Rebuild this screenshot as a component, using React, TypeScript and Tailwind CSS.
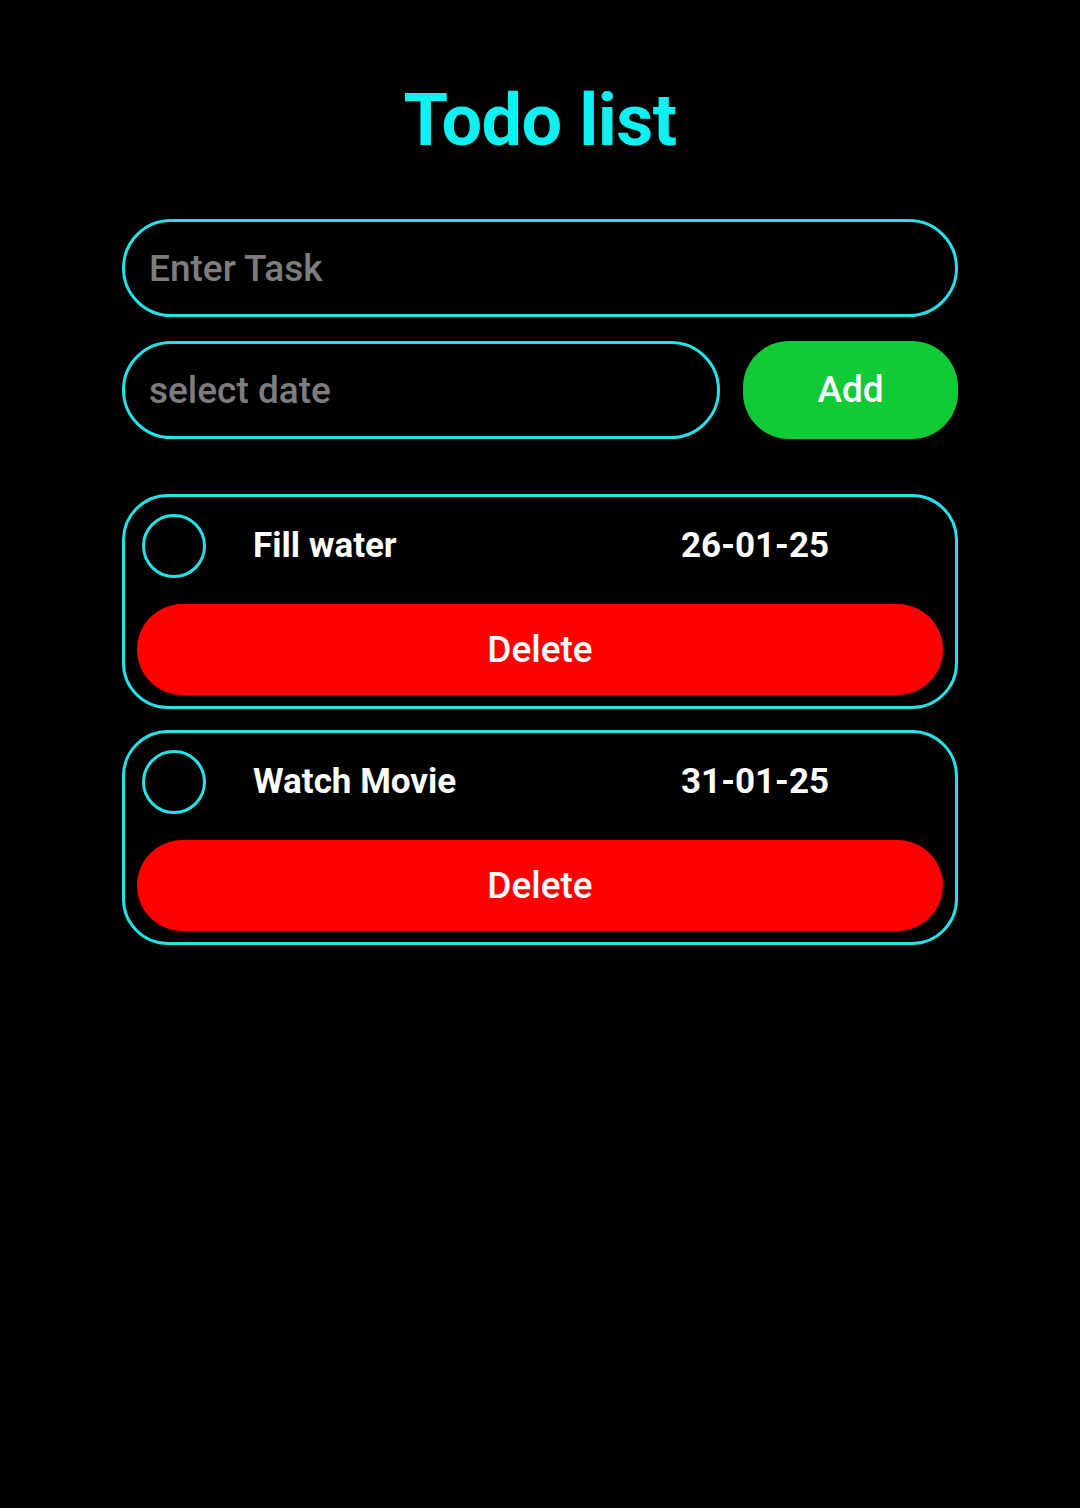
import { useState } from 'react';

type Task = { id: number; name: string; date: string };

const initialTasks: Task[] = [
  { id: 1, name: 'Fill water', date: '26-01-25' },
  { id: 2, name: 'Watch Movie', date: '31-01-25' },
];

function TaskCard({ task, onDelete }: { task: Task; onDelete: () => void }) {
  return (
    <div className="w-full h-[215px] rounded-[46px] border-[3px] border-[#25e2e8] px-[12px] pt-[17px]">
      <div className="flex items-center h-[64px]">
        <div className="w-[64px] h-[64px] shrink-0 rounded-full border-[3px] border-[#25e2e8] ml-[5px]" />
        <span className="ml-[47px] w-[428px] text-[35px] font-bold text-white">{task.name}</span>
        <span className="text-[35px] font-bold text-white">{task.date}</span>
      </div>
      <button
        onClick={onDelete}
        className="mt-[26px] w-full h-[91px] rounded-full bg-[#ff0000] text-white text-[37px] font-medium"
      >
        Delete
      </button>
    </div>
  );
}

export default function App() {
  const [tasks, setTasks] = useState(initialTasks);

  return (
    <div className="min-h-[1508px] w-full bg-black font-['Roboto',sans-serif] flex flex-col items-center">
      <h1 className="mt-[85px] text-[72px] font-bold leading-none text-[#0ff0f0] tracking-[-0.5px]">
        Todo list
      </h1>

      <div className="mt-[62px] w-[836px] flex flex-col">
        {/* Inputs */}
        <input
          placeholder="Enter Task"
          className="h-[98px] w-full rounded-full border-[3px] border-[#25e2e8] bg-black px-[24px] text-[37px] font-medium text-white placeholder:text-[#7d7d7d] outline-none"
        />
        <div className="mt-[24px] flex gap-[23px]">
          <input
            placeholder="select date"
            className="h-[98px] w-[598px] rounded-full border-[3px] border-[#25e2e8] bg-black px-[24px] text-[37px] font-medium text-white placeholder:text-[#7d7d7d] outline-none"
          />
          <button className="h-[98px] flex-1 rounded-[46px] bg-[#12c936] text-white text-[37px] font-medium">
            Add
          </button>
        </div>

        {/* Task list */}
        <div className="mt-[55px] flex flex-col gap-[21px]">
          {tasks.map((t) => (
            <TaskCard key={t.id} task={t} onDelete={() => setTasks(tasks.filter((x) => x.id !== t.id))} />
          ))}
        </div>
      </div>
    </div>
  );
}
